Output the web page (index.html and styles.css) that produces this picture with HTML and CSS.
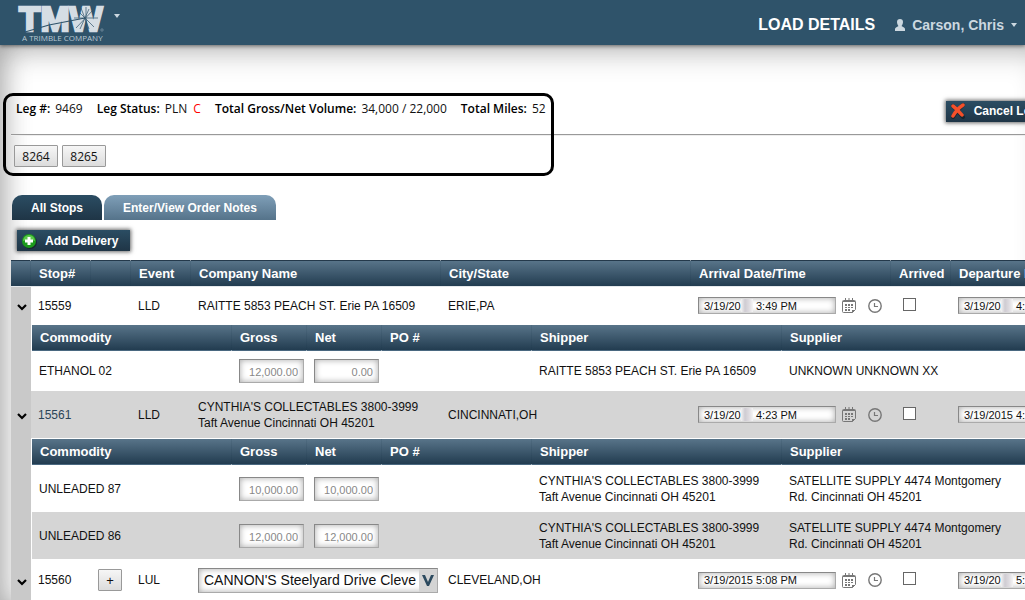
FILE: index.html
```
<!DOCTYPE html>
<html lang="en">
<head>
    <meta charset="UTF-8">
    <meta name="viewport" content="width=device-width, initial-scale=1.0">
    <title>Load Details</title>
    <link rel="stylesheet" href="styles.css">
</head>
<body>
    <!-- Shared icons -->
    <svg class="sprite" aria-hidden="true">
        <symbol id="calendar" viewBox="0 0 14 15">
            <path d="M1.5 2.5h11a1 1 0 0 1 1 1v8l-3 3h-9a1 1 0 0 1-1-1v-10a1 1 0 0 1 1-1z" fill="none" stroke="#777"/>
            <path d="M1 3h12v1H1zM3 0h1v3H3zM6.500 0h1v3h-1zM10 0h1v3h-1z" fill="#777"/>
            <path d="M3 6h2v2H3zM6 6h2v2H6zM9 6h2v2H9zM3 9h2v1H3zM6 9h2v1H6zM9 9h2v1H9zM3 11h2v2H3zM6 11h2v2H6zM10 12h3l-3 3z" fill="#777"/>
        </symbol>
        <symbol id="clock" viewBox="0 0 14 14">
            <circle cx="7" cy="7" r="6.200" fill="none" stroke="#777" stroke-width="1.400"/>
            <path d="M6.500 4v3.500H10" fill="none" stroke="#777" stroke-width="1.200"/>
        </symbol>
        <symbol id="chevron" viewBox="0 0 10 8">
            <path d="M1 2l4 4 4-4" fill="none" stroke="#000" stroke-width="2.200"/>
        </symbol>
    </svg>

    <header class="topbar">
        <a class="logo" href="#" aria-label="TMW home">
            <svg width="90" height="44" viewBox="0 0 90 44">
                <text class="logo-name" x="3" y="30">TMW</text>
                <path d="M9 31L33 24 69 17" fill="none" stroke="#2f536a" stroke-width="1.200"/>
                <path d="M70 6v23M58 17h24M61 9l17 17M78 8L60 27M65 7l8 21M73 8l-9 20" stroke="#2f536a" stroke-width=".7"/>
                <circle cx="86" cy="29" r="1.200" fill="none" stroke="#9fb1be" stroke-width=".5"/>
                <text class="logo-tag" x="6" y="40">A TRIMBLE COMPANY</text>
            </svg>
        </a>
        <button class="caret-btn" aria-label="Open menu"><span class="caret"></span></button>
        <h1>LOAD DETAILS</h1>
        <button class="user">
            <svg width="10" height="12" viewBox="0 0 10 12"><path d="M5 0c2 0 3 1.300 3 3S7 6.500 6.500 7L9 8.500q1 .5 1 1.500v2H0v-2q0-1 1-1.500L3.500 7C3 6.500 2 4.700 2 3s1-3 3-3z" fill="#ccd8e0"/></svg>
            Carson, Chris
            <span class="caret"></span>
        </button>
    </header>

    <main>
        <section class="leg">
            <div class="leg-bar">
                <dl>
                    <div><dt>Leg #:</dt><dd>9469</dd></div>
                    <div><dt>Leg Status:</dt><dd>PLN <span class="flag">C</span></dd></div>
                    <div><dt>Total Gross/Net Volume:</dt><dd>34,000 / 22,000</dd></div>
                    <div><dt>Total Miles:</dt><dd>52</dd></div>
                </dl>
                <button class="action">
                    <svg width="16" height="16" viewBox="0 0 16 16"><path d="M3 3q3 3 10 11M13 2Q7 7 3 14" fill="none" stroke="#111" stroke-width="4" stroke-linecap="round" opacity=".5"/><path d="M3 3q4 3 9 9M13 2Q7 6 3 13" fill="none" stroke="#f4502a" stroke-width="3.500" stroke-linecap="round"/></svg>
                    Cancel Load
                </button>
            </div>
            <hr>
            <div class="orders">
                <button>8264</button>
                <button>8265</button>
            </div>
            <div class="outline"></div>
        </section>

        <nav class="tabs">
            <button class="tab active">All Stops</button>
            <button class="tab">Enter/View Order Notes</button>
        </nav>
        <button class="action add">
            <svg width="16" height="16" viewBox="0 0 16 16"><circle cx="9" cy="9" r="7" fill="#111" opacity=".5"/><circle cx="8" cy="8" r="7" fill="#1c9a1c"/><path d="M2 8a6 6 0 0 1 12 0q-6-3-12 0z" fill="#5cc94c"/><path d="M8 4v8M4 8h8" stroke="#fff" stroke-width="3"/></svg>
            Add Delivery
        </button>

        <table class="stops">
            <colgroup>
                <col class="w20"><col class="w60"><col class="w40"><col class="w60"><col class="w250"><col class="w250"><col class="w200"><col class="w60"><col class="w200">
            </colgroup>
            <thead>
                <tr><th></th><th>Stop#</th><th></th><th>Event</th><th>Company Name</th><th>City/State</th><th>Arrival Date/Time</th><th>Arrived</th><th>Departure Date/Time</th></tr>
            </thead>
            <tbody>
                <tr class="stop">
                    <td class="toggle"><button aria-label="Toggle stop 15559"><svg width="10" height="8"><use href="#chevron"/></svg></button></td>
                    <td>15559</td>
                    <td></td>
                    <td>LLD</td>
                    <td>RAITTE 5853 PEACH ST. Erie PA 16509</td>
                    <td>ERIE,PA</td>
                    <td>
                        <div class="date"><input type="text" aria-label="Arrival of stop 15559" value="3/19/2015 3:49 PM"><span class="smudge"></span>
                            <button aria-label="Pick date"><svg width="14" height="15"><use href="#calendar"/></svg></button>
                            <button aria-label="Pick time"><svg width="14" height="14"><use href="#clock"/></svg></button></div>
                    </td>
                    <td class="tick"><input type="checkbox" aria-label="Stop 15559 arrived"></td>
                    <td><div class="date"><input type="text" aria-label="Departure of stop 15559" value="3/19/2015 4:04 PM"><span class="smudge"></span></div></td>
                </tr>
                <tr>
                    <td class="toggle"></td>
                    <td class="nested" colspan="8">
                        <table class="goods">
                            <colgroup><col class="w200"><col class="w75"><col class="w75"><col class="w150"><col class="w250"><col></colgroup>
                            <thead>
                                <tr><th>Commodity</th><th>Gross</th><th>Net</th><th>PO #</th><th>Shipper</th><th>Supplier</th></tr>
                            </thead>
                            <tbody>
                                <tr class="short">
                                    <td>ETHANOL 02</td>
                                    <td><input type="text" aria-label="Gross" value="12,000.00"></td>
                                    <td><input type="text" aria-label="Net" value="0.00"></td>
                                    <td></td>
                                    <td>RAITTE 5853 PEACH ST. Erie PA 16509</td>
                                    <td>UNKNOWN UNKNOWN XX</td>
                                </tr>
                            </tbody>
                        </table>
                    </td>
                </tr>
                <tr class="stop tall shade">
                    <td class="toggle"><button aria-label="Toggle stop 15561"><svg width="10" height="8"><use href="#chevron"/></svg></button></td>
                    <td><a href="#">15561</a></td>
                    <td></td>
                    <td>LLD</td>
                    <td>CYNTHIA'S COLLECTABLES 3800-3999<br>Taft Avenue Cincinnati OH 45201</td>
                    <td>CINCINNATI,OH</td>
                    <td>
                        <div class="date"><input type="text" aria-label="Arrival of stop 15561" value="3/19/2015 4:23 PM"><span class="smudge"></span>
                            <button aria-label="Pick date"><svg width="14" height="15"><use href="#calendar"/></svg></button>
                            <button aria-label="Pick time"><svg width="14" height="14"><use href="#clock"/></svg></button></div>
                    </td>
                    <td class="tick"><input type="checkbox" aria-label="Stop 15561 arrived"></td>
                    <td><div class="date"><input type="text" aria-label="Departure of stop 15561" value="3/19/2015 4:38 PM"></div></td>
                </tr>
                <tr>
                    <td class="toggle"></td>
                    <td class="nested" colspan="8">
                        <table class="goods">
                            <colgroup><col class="w200"><col class="w75"><col class="w75"><col class="w150"><col class="w250"><col></colgroup>
                            <thead>
                                <tr><th>Commodity</th><th>Gross</th><th>Net</th><th>PO #</th><th>Shipper</th><th>Supplier</th></tr>
                            </thead>
                            <tbody>
                                <tr>
                                    <td>UNLEADED 87</td>
                                    <td><input type="text" aria-label="Gross" value="10,000.00"></td>
                                    <td><input type="text" aria-label="Net" value="10,000.00"></td>
                                    <td></td>
                                    <td>CYNTHIA'S COLLECTABLES 3800-3999<br>Taft Avenue Cincinnati OH 45201</td>
                                    <td>SATELLITE SUPPLY 4474 Montgomery<br>Rd. Cincinnati OH 45201</td>
                                </tr>
                                <tr class="shade">
                                    <td>UNLEADED 86</td>
                                    <td><input type="text" aria-label="Gross" value="12,000.00"></td>
                                    <td><input type="text" aria-label="Net" value="12,000.00"></td>
                                    <td></td>
                                    <td>CYNTHIA'S COLLECTABLES 3800-3999<br>Taft Avenue Cincinnati OH 45201</td>
                                    <td>SATELLITE SUPPLY 4474 Montgomery<br>Rd. Cincinnati OH 45201</td>
                                </tr>
                            </tbody>
                        </table>
                    </td>
                </tr>
                <tr class="stop open">
                    <td class="toggle"><button aria-label="Toggle stop 15560"><svg width="10" height="8"><use href="#chevron"/></svg></button></td>
                    <td>15560</td>
                    <td><button class="plus" aria-label="Add to stop 15560">+</button></td>
                    <td>LUL</td>
                    <td>
                        <div class="company">
                            <select aria-label="Company"><option>CANNON'S Steelyard Drive Cleveland OH</option></select>
                            <svg width="18" height="23" viewBox="0 0 18 23"><path d="M0 0h18v23H0z" fill="#d4d4d4"/><path d="M3 6h3l3 7 3-7h3l-5 11H8z" fill="#2c4a5f"/></svg>
                        </div>
                    </td>
                    <td>CLEVELAND,OH</td>
                    <td>
                        <div class="date"><input type="text" aria-label="Arrival of stop 15560" value="3/19/2015 5:08 PM">
                            <button aria-label="Pick date"><svg width="14" height="15"><use href="#calendar"/></svg></button>
                            <button aria-label="Pick time"><svg width="14" height="14"><use href="#clock"/></svg></button></div>
                    </td>
                    <td class="tick"><input type="checkbox" aria-label="Stop 15560 arrived"></td>
                    <td><div class="date"><input type="text" aria-label="Departure of stop 15560" value="3/19/2015 5:23 PM"><span class="smudge"></span></div></td>
                </tr>
            </tbody>
        </table>
    </main>
</body>
</html>
```
FILE: styles.css
```
* {
    padding: 0;
    margin: 0;
    box-sizing: border-box;
}
body {
    height: 100vh;
    overflow: hidden;
    display: flex;
    flex-direction: column;
    background-color: #fff;
    color: #111;
    font: 12px/16px "Liberation Sans", Arial, sans-serif;
}
button, input, select {
    font-family: inherit;
    color: inherit;
}
button {
    border: none;
    background: none;
    cursor: pointer;
}
svg {
    display: block;
}
.sprite {
    position: absolute;
    width: 0;
    height: 0;
}

/* TOP BAR */
.topbar {
    flex: none;
    height: 45px;
    padding: 0 8px 0 16px;
    display: flex;
    align-items: center;
    background-color: #2f536a;
    box-shadow: 0 1px 4px rgba(0, 0, 0, 0.5);
    z-index: 1;
}
.logo-name {
    font: bold 35px "Liberation Sans", Arial, sans-serif;
    fill: #d5dde4;
    stroke: #d5dde4;
    stroke-width: 2.5px;
}
.logo-tag {
    font: 8px "Open Sans", sans-serif;
    fill: #b9c8d2;
}
.caret {
    border: 3px solid transparent;
    border-top: 4px solid #ccd8e0;
    border-bottom: none;
}
.caret-btn {
    display: flex;
    align-self: flex-start;
    padding: 14px 8px;
}
.topbar h1 {
    margin-left: auto;
    margin-right: 20px;
    padding-top: 5px;
    font-size: 16px;
    color: #fff;
}
.user {
    display: flex;
    align-items: center;
    gap: 7px;
    padding-top: 5px;
    font-size: 14px;
    font-weight: bold;
    color: #ccd8e0;
}

/* PAGE */
main {
    flex: 1;
    min-height: 0;
    margin-right: -16px;
    padding: 48px 0 0 11px;
    overflow: hidden;
    box-shadow: inset 0 10px 28px rgba(0, 0, 0, 0.2), inset 12px 0 28px -6px rgba(0, 0, 0, 0.2);
}
.leg {
    position: relative;
    height: 102px;
}
.leg-bar {
    display: flex;
    justify-content: space-between;
    align-items: center;
    height: 41px;
    padding-bottom: 9px;
    margin-right: -16px;
}
.leg dl {
    display: flex;
    gap: 14px;
    padding-left: 5px;
    font: 12px/16px "Open Sans", sans-serif;
}
.leg dl div {
    display: flex;
    gap: 5px;
}
.leg dt {
    font-weight: 600;
    color: #000;
}
.flag {
    margin-left: 3px;
    color: #f00;
}
.leg hr {
    border: none;
    border-top: 1px solid #999;
    border-bottom: 1px solid #eee;
}
.outline {
    position: absolute;
    top: 0;
    left: -8px;
    width: 551px;
    height: 83px;
    border: 3px solid #000;
    border-radius: 10px;
    pointer-events: none;
}
.orders {
    display: flex;
    gap: 4px;
    padding: 9px 3px;
}
.orders button, .plus {
    height: 22px;
    border: 1px solid #999;
    border-radius: 1px;
    background: linear-gradient(#f6f6f6, #dcdcdc);
}
.orders button {
    width: 44px;
    font: 12px "Open Sans", sans-serif;
}
.action {
    display: flex;
    align-items: center;
    gap: 8px;
    height: 21px;
    padding: 0 12px 0 4px;
    font-size: 12px;
    font-weight: bold;
    white-space: nowrap;
    color: #fff;
    background: linear-gradient(#2b4d63, #1f3546);
    box-shadow: 0 0 4px 1px rgba(0, 0, 0, 0.6);
}
.leg-bar .action {
    margin-top: 4px;
}
.add {
    margin: 10px 0 9px 6px;
}

/* TABS */
.tabs {
    display: flex;
    gap: 2px;
    padding-left: 1px;
}
.tab {
    height: 25px;
    padding: 0 19px;
    border-radius: 10px 10px 0 0;
    font-size: 12px;
    font-weight: bold;
    color: #fff;
    background: linear-gradient(#7f9fb8, #55738a);
}
.tab.active {
    background: linear-gradient(#2b4d63, #1f3546);
}

/* TABLES */
table {
    table-layout: fixed;
    border-collapse: separate;
    border-spacing: 0;
}
.stops {
    width: 1140px;
    background-color: #fff;
}
.goods {
    width: 100%;
}
.w20 { width: 20px; }
.w40 { width: 40px; }
.w60 { width: 60px; }
.w75 { width: 75px; }
.w150 { width: 150px; }
.w200 { width: 200px; }
.w250 { width: 250px; }
th {
    height: 26px;
    padding-left: 8px;
    font-size: 13px;
    text-align: left;
    white-space: nowrap;
    color: #fff;
    background: linear-gradient(#587489, #223c50);
    border-right: 1px solid rgba(20, 45, 65, 0.1);
    border-bottom: 1px solid #4a6880;
}
.stops > thead th {
    height: 27px;
    border-top: 1px solid #24394b;
    border-bottom-color: #e4e8eb;
}
td {
    height: 47px;
    padding-left: 7px;
    vertical-align: middle;
}
.stop td {
    height: 37px;
}
.stop.tall td {
    height: 47px;
}
.stop.open td {
    height: 42px;
}
.goods .short td {
    height: 40px;
}
.shade td {
    background-color: #d5d5d5;
}
.nested {
    padding: 1px 0 0 1px;
}
td a {
    color: #2b4558;
    text-decoration: none;
}
td.toggle {
    padding: 3px 0 0 6px;
    background-color: #c9c9c9;
}

/* FIELDS */
td input, select {
    border: 1px solid #aaa;
    border-top-color: #888;
    border-left-color: #888;
    background-color: #fff;
    box-shadow: inset 0 0 6px rgba(0, 0, 0, 0.35);
}
.goods input {
    display: block;
    width: 65px;
    height: 24px;
    padding: 2px 5px 0;
    font-size: 11px;
    text-align: right;
    color: #888;
}
.date {
    position: relative;
    display: flex;
    align-items: center;
    gap: 12px;
}
.date input {
    width: 138px;
    height: 17px;
    padding: 0 5px;
    margin-right: -6px;
    font-size: 11px;
}
.smudge {
    position: absolute;
    left: 43px;
    top: 2px;
    width: 12px;
    height: 13px;
    background: linear-gradient(90deg, #f2f2f2, #cfccd2, #dedbe0, #f4f4f4);
}
.tick input {
    display: block;
    appearance: none;
    width: 13px;
    height: 13px;
    margin: 0 0 3px 5px;
    border: 1px solid #666;
    box-shadow: none;
}
.plus {
    width: 24px;
    font-size: 13px;
}
.company {
    position: relative;
    width: 240px;
}
.company select {
    display: block;
    appearance: none;
    width: 100%;
    height: 25px;
    padding: 0 21px 0 5px;
    font-size: 14px;
}
.company svg {
    position: absolute;
    top: 1px;
    right: 1px;
    pointer-events: none;
}
```
